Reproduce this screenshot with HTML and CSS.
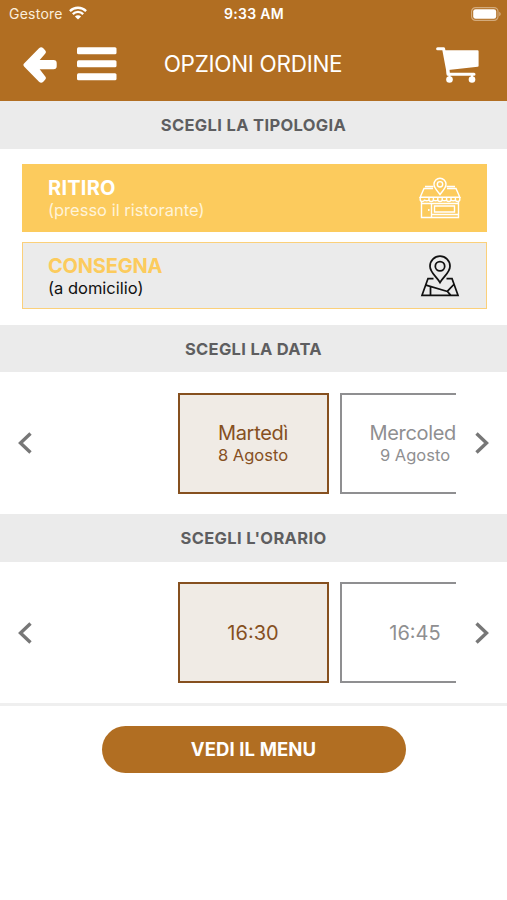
FILE: index.html
```html
<!DOCTYPE html>
<html lang="it">
<head>
<meta charset="utf-8">
<meta name="viewport" content="width=device-width, initial-scale=1">
<title>Opzioni ordine</title>
<link rel="stylesheet" href="styles.css">
</head>
<body>
<header class="header">
  <div class="status">
    <div class="status-left"><span class="carrier">Gestore</span>
      <svg class="wifi" viewBox="0 0 18 14" fill="none" stroke="currentColor" stroke-width="2.3"><path d="M.9 5.1C5.4.6 12.6.6 17.1 5.1M3.8 8.1c2.9-2.9 7.5-2.9 10.4 0"/><path d="M9 13.6 5.9 10.5c1.8-1.6 4.4-1.6 6.2 0Z" fill="currentColor" stroke="none"/></svg>
    </div>
    <span class="clock">9:33 AM</span>
    <div class="status-right"><svg class="battery" viewBox="0 0 30 14"><rect x=".6" y=".6" width="26.4" height="12.8" rx="4" fill="none" stroke="#d3ab7c" stroke-width="1.2"/><rect x="2.2" y="2.2" width="23" height="9.6" rx="2.4" fill="#fff"/><path d="M28.2 4.8c2 .8 2 3.6 0 4.4Z" fill="#d3ab7c"/></svg></div>
  </div>
  <nav class="nav">
    <div class="nav-left">
      <svg class="back" viewBox="0 0 34 36" fill="currentColor"><path d="M1.3 16.3 16 1.3c1.500-1.500 3-1.300 4.300 0l1.600 1.600c1.300 1.300 1.400 2.800 0 4.200L16.700 13H30.500c2.200 0 3.200 1.100 3.200 3v3.200c0 1.900-1 3-3.200 3H16.700l5.200 6.700c1.400 1.400 1.300 2.900 0 4.200l-1.600 1.600c-1.300 1.300-2.800 1.500-4.300 0L1.300 19.700c-1.200-1.200-1.200-2.200 0-3.400Z"/></svg>
      <svg class="burger" viewBox="0 0 40 34" fill="currentColor"><rect width="39.5" height="7" y=".3" rx="1.5"/><rect y="13.3" width="39.5" height="7" rx="1.5"/><rect y="26.3" width="39.5" height="7" rx="1.5"/></svg>
    </div>
    <h1 class="title">OPZIONI ORDINE</h1>
    <div class="nav-right"><svg class="cart" viewBox="0 0 43 36" fill="none" stroke="currentColor" stroke-linecap="round" stroke-linejoin="round"><path d="M1.6 1.7h6l4.7 25" stroke-width="3"/><path d="M9.4 4.200h32.200v14.500L12.200 22Z" fill="currentColor" stroke-width="2"/><path d="M12 22.500v4.700h26" stroke-width="3"/><circle cx="13.5" cy="32.5" r="3.3" fill="currentColor" stroke="none"/><circle cx="36" cy="32.5" r="3.3" fill="currentColor" stroke="none"/><path d="M13.500 27v4M36 27v4" stroke-width="2"/></svg></div>
  </nav>
</header>
<main>
  <h2 class="section t1">SCEGLI LA TIPOLOGIA</h2>
  <div class="types">
    <div class="type selected">
      <div><div class="type-name ritiro">RITIRO</div><div class="type-note">(presso il ristorante)</div></div>
      <svg class="type-icon" viewBox="0 0 42 42" fill="none" stroke="currentColor" stroke-width="1.4"><path d="M14.500 9.500H6M27.500 9.500H36M14 11.500H5L1.200 20.200H40.800L37 11.500H28"/><path d="M1.200 20v2.500c0 2.600 4 2.600 4.400 0M10 20v2.500c0 2.600 4.400 2.600 4.400 0V20M18.800 20v2.500c0 2.600 4.400 2.600 4.400 0V20M27.600 20v2.500c0 2.600 4.400 2.600 4.400 0V20M36.400 20v2.500c0 2.600 4.400 2.600 4.400 0V20M5.600 22.500c0 1.700 4.400 1.700 4.400 0M14.400 22.500c0 1.700 4.400 1.700 4.400 0M23.200 22.500c0 1.700 4.400 1.700 4.400 0M32 22.500c0 1.700 4.400 1.700 4.400 0"/><path d="M2.500 25v15.500h37V25M12.500 26v14.500M3 26.500h36M15.500 29h20v6H15.500ZM12.500 37.500h27M9.800 32v2"/><path d="M21 17.500c-2.500-3.700-6-6.300-6-10.200a6 6 0 0 1 12 0c0 3.900-3.500 6.500-6 10.200Z"/><circle cx="21" cy="7.300" r="2.700"/></svg>
    </div>
    <div class="type">
      <div><div class="type-name">CONSEGNA</div><div class="type-note">(a domicilio)</div></div>
      <svg class="type-icon" viewBox="0 0 42 42" fill="none" stroke="currentColor" stroke-width="1.75"><path d="M21 27.500c-3.500-6-10-10-10-16.300a10 10 0 0 1 20 0C31 17.500 24.500 21.500 21 27.500Z"/><circle cx="21" cy="11.200" r="4.700"/><path d="M14.500 23.500H9L3 40.300h36L33 23.500h-5.500M7 30.200l21.500 6.300M11.500 31.500v8.800M34.800 29.500l-6.500 6.800 3.500 4"/></svg>
    </div>
  </div>
  <h2 class="section t2">SCEGLI LA DATA</h2>
  <div class="picker">
    <svg class="chev" viewBox="0 0 14 22"><path d="M12.500 1.500 2.500 11l10 9.500"/></svg>
    <div class="track">
      <div class="slot active"><span class="big day">Martedì</span><span class="small">8 Agosto</span></div>
      <div class="slot"><span class="big day">Mercoledì</span><span class="small">9 Agosto</span></div>
    </div>
    <svg class="chev" viewBox="0 0 14 22"><path d="M1.500 1.500 11.500 11l-10 9.500"/></svg>
  </div>
  <h2 class="section t3">SCEGLI L'ORARIO</h2>
  <div class="picker">
    <svg class="chev" viewBox="0 0 14 22"><path d="M12.500 1.500 2.500 11l10 9.500"/></svg>
    <div class="track">
      <div class="slot active"><span class="big">16:30</span></div>
      <div class="slot"><span class="big">16:45</span></div>
    </div>
    <svg class="chev" viewBox="0 0 14 22"><path d="M1.500 1.500 11.500 11l-10 9.500"/></svg>
  </div>
  <div class="footer"><button class="menu-button">VEDI IL MENU</button></div>
</main>
</body>
</html>
```

FILE: styles.css
```css
* { box-sizing: border-box; }
body { margin: 0; background: #fff; font-family: Inter, "Liberation Sans", sans-serif; }
svg { display: block; flex: none; }
h1, h2 { margin: 0; }

.header { height: 101px; background: #b16e22; color: #fff; }
.status { height: 28px; display: grid; grid-template-columns: 1fr auto 1fr; align-items: center; padding: 0 8px 0 9px; font-size: 14px; line-height: 20px; }
.status-left { display: flex; align-items: center; gap: 6px; color: #fbeedd; }
.carrier { letter-spacing: 0.25px; }
.wifi { width: 18px; height: 14px; margin-top: -3px; color: #fff; }
.clock { font-weight: 600; letter-spacing: 0.3px; }
.status-right { display: flex; justify-content: flex-end; }
.battery { width: 30px; height: 14px; margin: -1px -2px 0 0; }
.nav { height: 72px; display: grid; grid-template-columns: 1fr auto 1fr; align-items: center; padding: 0 28px 0 22.5px; }
.nav-left { display: flex; align-items: center; gap: 20px; }
.back { width: 34px; height: 36px; margin-top: 2px; }
.burger { width: 40px; height: 34px; }
.title { font-size: 22.5px; line-height: 30px; font-weight: 400; letter-spacing: -0.3px; padding-left: 4.5px; }
.nav-right { display: flex; justify-content: flex-end; }
.cart { width: 43px; height: 36px; margin-top: 2px; }

.section { height: 47.5px; background: #ebebeb; color: #5e5e60; display: flex; align-items: center; justify-content: center; font-size: 16.5px; font-weight: 700; padding-top: 1px; }
.t1 { letter-spacing: 0.35px; }
.t2 { letter-spacing: 0.3px; }
.t3 { letter-spacing: 0.35px; }
.types { height: 176px; padding: 15.5px 20.5px 0 21.5px; display: flex; flex-direction: column; gap: 10px; }
.type { height: 67.5px; display: flex; align-items: center; justify-content: space-between; padding: 3px 25px 0 25.5px; border: 1.5px solid #fbd07a; background: #ebebeb; color: #111; }
.type.selected { background: #fccb5d; border-color: #fccb5d; color: #fff; }
.type-name { font-size: 20px; line-height: 22px; font-weight: 700; color: #fccb5d; letter-spacing: -0.2px; }
.ritiro { letter-spacing: 0.25px; }
.selected .type-name { color: #fff; }
.type-note { font-size: 16.5px; line-height: 22px; }
.type-icon { width: 42px; height: 42px; margin-top: -2px; }
.selected .type-note { color: #fff3d8; }

.picker { height: 142px; display: flex; align-items: center; justify-content: space-between; padding: 0 18px; }
.chev { width: 14px; height: 22px; fill: none; stroke: #777; stroke-width: 3.4; }
.track { width: 405px; margin-right: 1px; padding-left: 127px; overflow: hidden; display: flex; gap: 11px; }
.slot { width: 151px; height: 101px; flex: none; border: 2px solid #8f8f91; color: #8f8f91; display: flex; flex-direction: column; align-items: center; justify-content: center; }
.slot.active { border-color: #86501f; background: #f0ebe5; color: #86501f; }
.big { font-size: 20px; line-height: 24px; }
.day { letter-spacing: -0.3px; }
.small { font-size: 16.5px; line-height: 21px; }
.footer { margin-top: -1px; border-top: 3px solid #efefef; padding-top: 20px; display: flex; justify-content: center; }
.menu-button { width: 304px; height: 47.5px; padding: 0; border: 0; border-radius: 24px; background: #b16e22; color: #fff; font: 700 18.5px Inter, sans-serif; letter-spacing: 0.1px; }
```
